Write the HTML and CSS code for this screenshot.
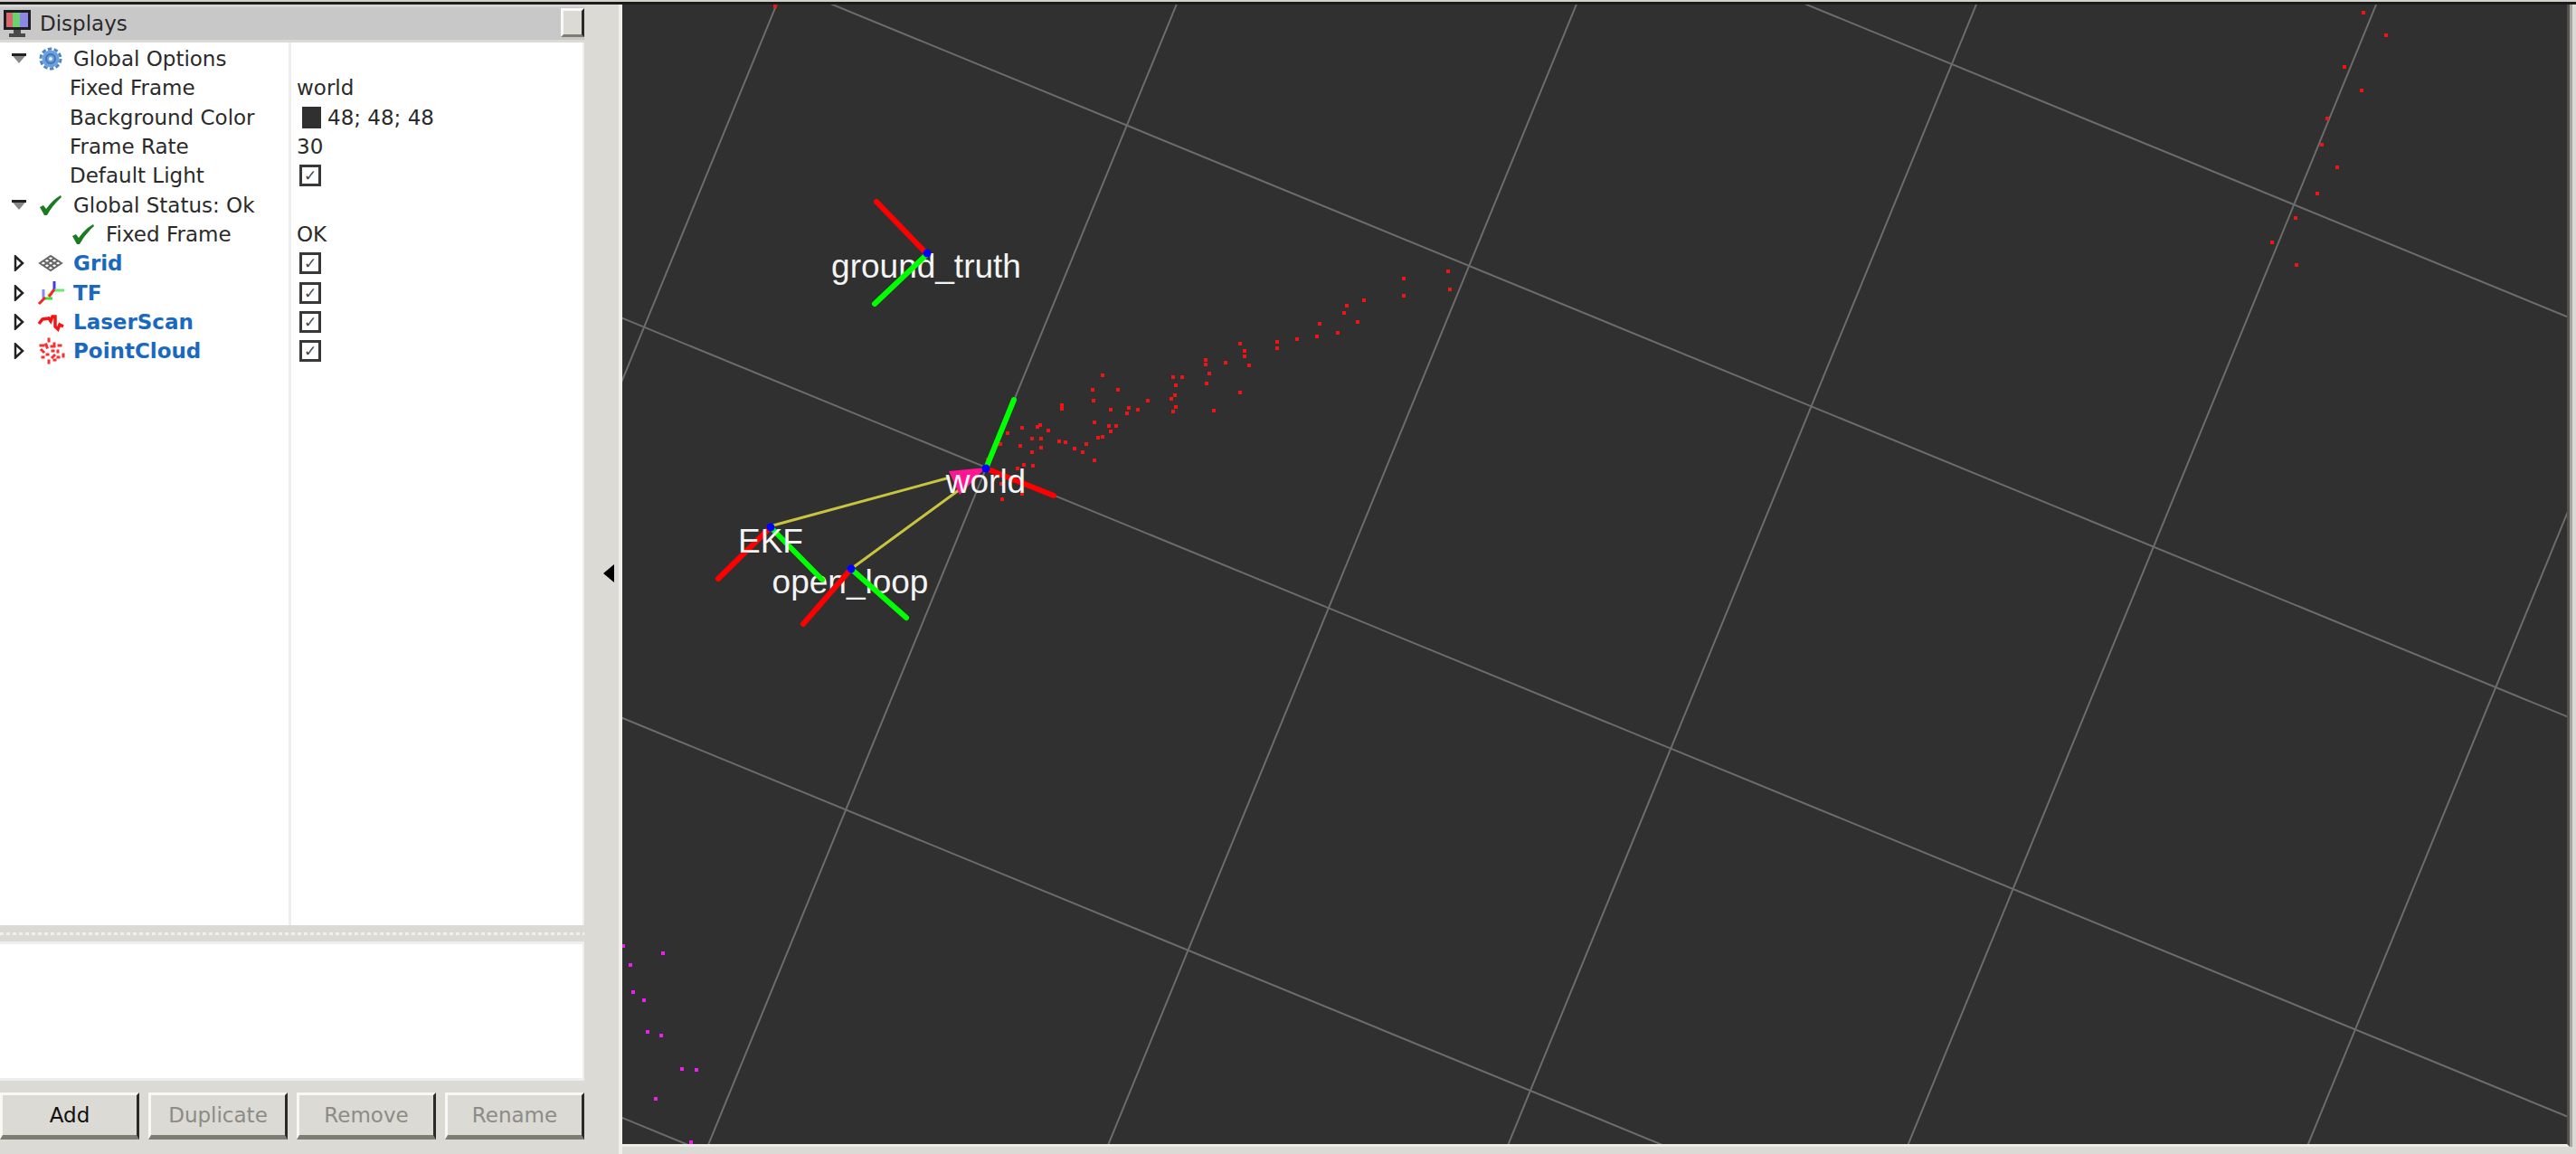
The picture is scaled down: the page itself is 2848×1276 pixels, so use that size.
FILE: index.html
```html
<!DOCTYPE html>
<html lang="en">
<head>
<meta charset="utf-8">
<title>Displays</title>
<link rel="stylesheet" href="styles.css">
</head>
<body>
<svg class="defs" width="0" height="0" aria-hidden="true">
  <symbol id="open" viewBox="0 0 18 12"><path d="M1 1.500H17L9 11Z" fill="#888"/><path d="M1 1.500H17" stroke="#222" stroke-width="3"/></symbol>
  <symbol id="closed" viewBox="0 0 12 18"><path d="M2 1.500V16.500L10 9Z" fill="#fff" stroke="#222" stroke-width="2.500"/></symbol>
  <symbol id="tick" viewBox="0 0 26 24"><path d="M1 14L5 12L8 16Q15 6 24 1L25 3Q15 12 9 23L6 23Z" fill="#1c7a22"/></symbol>
</svg>
<div class="toolbar-edge"></div>
<main class="workspace">
  <section class="panel" aria-label="Displays">
    <header class="title">
      <svg class="monitor" viewBox="0 0 30 30"><path d="M0 0H30V22H0Z" fill="#1d1d22"/><path d="M3 3H10V19H3Z" fill="#d4686c"/><path d="M10 3H18V19H10Z" fill="#6fd070"/><path d="M18 3H27V19H18Z" fill="#8c86e4"/><path d="M11 22H19V26H24V30H6V26H11Z" fill="#4a4a4a"/></svg>
      <h1>Displays</h1>
      <button class="float" type="button" aria-label="Float panel"></button>
    </header>
    <div class="tree">
      <table>
        <tr><td><div class="name"><svg class="arrow"><use href="#open"/></svg><svg class="icon" viewBox="0 0 26 26"><circle cx="13" cy="13" r="9.500" fill="#6f9fda"/><circle cx="13" cy="13" r="11" fill="none" stroke="#4f86c8" stroke-width="3" stroke-dasharray="4.500 2.400"/><circle cx="13" cy="13" r="5" fill="none" stroke="#3c76bd" stroke-width="2"/><circle cx="13" cy="13" r="2" fill="#e3eefb"/></svg>Global Options</div></td><td></td></tr>
        <tr><td><div class="name prop">Fixed Frame</div></td><td>world</td></tr>
        <tr><td><div class="name prop">Background Color</div></td><td><div class="color"><span class="swatch"></span>48; 48; 48</div></td></tr>
        <tr><td><div class="name prop">Frame Rate</div></td><td>30</td></tr>
        <tr><td><div class="name prop"><label for="light">Default Light</label></div></td><td><input id="light" type="checkbox" checked></td></tr>
        <tr><td><div class="name"><svg class="arrow"><use href="#open"/></svg><svg class="icon"><use href="#tick"/></svg>Global Status: Ok</div></td><td></td></tr>
        <tr><td><div class="name status"><svg class="icon"><use href="#tick"/></svg>Fixed Frame</div></td><td>OK</td></tr>
        <tr><td><div class="name display"><svg class="arrow"><use href="#closed"/></svg><svg class="icon" viewBox="0 0 26 26"><path d="M1 13L13 5L25 13L13 21ZM5 10.300L17 18.300M9 7.700L21 15.700M5 15.700L17 7.700M9 18.300L21 10.300" fill="none" stroke="#666" stroke-width="2"/></svg><label for="grid">Grid</label></div></td><td><input id="grid" type="checkbox" checked></td></tr>
        <tr><td><div class="name display"><svg class="arrow"><use href="#closed"/></svg><svg class="icon" viewBox="0 0 26 26"><g fill="none" stroke-width="3"><path d="M5 9V19" stroke="#8a86f4"/><path d="M17 0V10" stroke="#3c3cf0"/><path d="M17 10H28" stroke="#63ee63"/><path d="M6 19H15" stroke="#36e036"/><path d="M9 15H14" stroke="#f4ec70"/><path d="M0 25L7 18M11 17L17 9" stroke="#f02828"/></g></svg><label for="tf">TF</label></div></td><td><input id="tf" type="checkbox" checked></td></tr>
        <tr><td><div class="name display"><svg class="arrow"><use href="#closed"/></svg><svg class="icon" viewBox="0 0 26 26"><path d="M0 15L4 10L11 9L13 12L15 7H18V18L21 21L23 16L27 18" fill="none" stroke="#f51414" stroke-width="3.500"/></svg><label for="laser">LaserScan</label></div></td><td><input id="laser" type="checkbox" checked></td></tr>
        <tr><td><div class="name display"><svg class="arrow"><use href="#closed"/></svg><svg class="icon" viewBox="0 0 26 26"><path d="M11 0V2M2 7H5M8 6L9 9M17 5V6M22 7H24M3 12L5 14M15 13H16M21 13V14M9 17H10M4 20H5M15 20L17 18M21 20H22M27 17V19M11 24V26M17 23H18M14 8H17" fill="none" stroke="#f83030" stroke-width="3" stroke-linecap="square"/></svg><label for="cloud">PointCloud</label></div></td><td><input id="cloud" type="checkbox" checked></td></tr>
      </table>
    </div>
    <div class="splitter"></div>
    <div class="description"></div>
    <div class="actions">
      <button type="button">Add</button>
      <button type="button" disabled>Duplicate</button>
      <button type="button" disabled>Remove</button>
      <button type="button" disabled>Rename</button>
    </div>
  </section>
  <button class="collapse" type="button" aria-label="Hide panel"><svg viewBox="0 0 14 20"><path d="M13 0V20L1 10Z"/></svg></button>
  <div class="view">
    <svg viewBox="688 5 2150 1260" preserveAspectRatio="xMidYMid slice">
      <g class="grid" transform="translate(1090.500 517) rotate(22.320)">
        <path d="M-900 -1227H2400M-900 -818H2400M-900 -409H2400M-900 0H2400M-900 409H2400M-900 818H2400"/>
        <path d="M-409 -1300V1300M0 -1300V1300M409 -1300V1300M818 -1300V1300M1227 -1300V1300M1636 -1300V1300M2045 -1300V1300"/>
      </g>
      <path class="points" d="M1219 415h0M1208 431h0M1236 431h0M1209 443h0M1174 448h0M1174 452h0M1228 453h0M1248 451h0M1246 457h0M1258 453h0M1269 443h0M1210 467h0M1226 471h0M1234 471h0M1228 477h0M1214 484h0M1219 483h0M1201 491h0M1197 500h0M1188 496h0M1178 489h0M1171 488h0M1159 476h0M1150 470h0M1147 472h0M1130 473h0M1114 479h0M1106 491h0M1141 485h0M1151 485h0M1128 493h0M1151 495h0M1141 500h0M1132 514h0M1142 515h0M1125 518h0M1210 509h0M1092 508h0M1107 535h0M1130 546h0M1108 552h0M1297 417h0M1307 417h0M1300 426h0M1299 437h0M1295 441h0M1300 450h0M1297 455h0M1333 398h0M1333 403h0M1337 413h0M1334 424h0M1342 454h0M1371 434h0M1355 401h0M1371 380h0M1376 388h0M1376 394h0M1381 404h0M1412 378h0M1412 385h0M1434 375h0M1456 372h0M1459 358h0M1479 368h0M1486 346h0M1489 338h0M1501 356h0M1508 332h0M1552 308h0M1552 327h0M1601 300h0M1603 320h0"/>
      <path class="points" d="M857 7h0M2613 14h0M2638 39h0M2592 74h0M2611 100h0M2573 131h0M2567 160h0M2584 185h0M2562 214h0M2538 241h0M2512 268h0M2539 293h0"/>
      <path class="points far" d="M689 1046h0M733 1054h0M697 1067h0M700 1097h0M712 1106h0M716 1141h0M731 1145h0M754 1182h0M770 1183h0M725 1215h0M764 1263h0"/>
      <text x="1024" y="307">ground_truth</text>
      <text x="940" y="656">open_loop</text>
      <path class="link" d="M851 582L1050 528M941 629L1060 542"/>
      <path d="M1049 521L1090 517L1061 547Z" fill="#ff1493"/>
      <path class="axis x" d="M1025 281L969 223M1090 518L1165 548M852 583L794 640M941 629L888 690"/>
      <path class="axis y" d="M1025 281L967 336M1090 518L1121 442M852 583L909 641M941 629L1002 683"/>
      <path class="origin" d="M1025 280h0M1090 518h0M852 583h0M941 629h0"/>
      <text x="1090" y="545">world</text>
      <text x="852" y="611">EKF</text>
    </svg>
  </div>
</main>
</body>
</html>
```
FILE: styles.css
```css
* { box-sizing: border-box; }

body {
  margin: 0;
  height: 100vh;
  display: flex;
  flex-direction: column;
  background: #dbdad5;
  color: #2a2a2a;
  font: 23px/32px "DejaVu Sans", sans-serif;
  overflow: hidden;
}

.defs { position: absolute; }

.toolbar-edge {
  height: 5px;
  flex: none;
  background: #d2d1ca;
  border-bottom: 3px solid #1c1c1c;
}

.workspace {
  flex: 1;
  min-height: 0;
  display: flex;
}

.panel {
  width: 646px;
  flex: none;
  display: flex;
  flex-direction: column;
  padding-bottom: 16px;
}

.title {
  height: 39px;
  flex: none;
  display: flex;
  align-items: center;
  gap: 10px;
  padding-left: 4px;
  background: #c8c8c8;
  border-top: 3px solid #d6d6d6;
}

.title h1 {
  margin: 0;
  flex: 1;
  font: inherit;
}

.monitor { width: 30px; height: 30px; }

button {
  font: inherit;
  color: #111;
  background: #dbdad5;
  border: 3px solid;
  border-color: #f8f8f4 #2a2a28 #7d7d74 #f8f8f4;
  border-radius: 0;
  padding: 0;
}

.float { width: 26px; height: 32px; margin-bottom: 3px; }

.tree {
  flex: 1;
  min-height: 0;
  margin-top: 3px;
  padding-top: 2px;
  background: linear-gradient(#eee, #eee) 319px 0 / 3px 100% no-repeat #fff;
  border-right: 2px solid #eee;
}

table {
  width: 100%;
  border-collapse: collapse;
  table-layout: fixed;
}

td {
  height: 32px;
  padding: 0;
  white-space: nowrap;
  line-height: 32px;
}

tr:nth-child(3n) td { height: 33px; }

td:first-child { width: 320px; }

td + td { padding-left: 8px; }

.name {
  display: flex;
  align-items: center;
  padding-left: 12px;
}

.name.prop { padding-left: 77px; }
.name.status { padding-left: 79px; }

.display {
  color: #1a69bf;
  font-weight: bold;
}

.arrow {
  width: 18px;
  height: 18px;
  margin-right: 13px;
}

.icon {
  width: 26px;
  height: 26px;
  margin-right: 12px;
  overflow: visible;
}

.color {
  display: flex;
  align-items: center;
  gap: 7px;
  padding-left: 6px;
}

.swatch {
  width: 21px;
  height: 24px;
  background: #303030;
}

input[type="checkbox"] {
  appearance: none;
  display: grid;
  place-items: center;
  width: 24px;
  height: 24px;
  margin: 0 3px;
  border: 3px solid #383838;
  background: #fff;
}

input:checked::before {
  content: "✓";
  font: bold 17px/18px "DejaVu Sans", sans-serif;
  color: #444;
}

.splitter {
  height: 18px;
  flex: none;
  background: repeating-linear-gradient(90deg, #f0f0ec 0 4px, #dbdad5 4px 7px) 0 8px / 100% 3px no-repeat;
}

.description {
  height: 154px;
  flex: none;
  background: #fff;
  border: solid #eee;
  border-width: 3px 2px 3px 0;
}

.actions {
  flex: none;
  display: grid;
  grid-template-columns: repeat(4, 1fr);
  gap: 10px;
  margin-top: 13px;
}

.actions button {
  height: 52px;
  border-bottom-width: 5px;
}

button:disabled { color: #8c8c86; }

.collapse {
  width: 42px;
  flex: none;
  border: 0;
  border-right: 4px solid #f0efeb;
  display: flex;
  align-items: center;
  justify-content: flex-end;
  padding: 0 4px 14px 0;
}

.collapse svg { width: 14px; height: 20px; }

.view {
  flex: 1;
  min-width: 0;
  margin: 0 7px 8px 0;
  background: #303030;
  border-right: 3px solid #55524d;
  border-bottom: 3px solid #eeede8;
  box-shadow: 3px 0 #a8a6a1;
}

.view svg {
  display: block;
  width: 100%;
  height: 100%;
}

.view path { fill: none; }
.view path[fill] { fill: #ff1493; }

.grid { stroke: #6c6c6c; stroke-width: 2; }
.points { stroke: #f01414; stroke-width: 4; stroke-linecap: square; }
.far { stroke: #f01cf0; }
.link { stroke: #c8c440; stroke-width: 3; }
.axis { stroke-width: 6; stroke-linecap: round; }
.x { stroke: #f00; }
.y { stroke: #0f0; }
.origin { stroke: #00f; stroke-width: 9; stroke-linecap: round; }

.view text {
  font: 37px "Liberation Sans", sans-serif;
  fill: #f4f4f4;
  text-anchor: middle;
}
```
